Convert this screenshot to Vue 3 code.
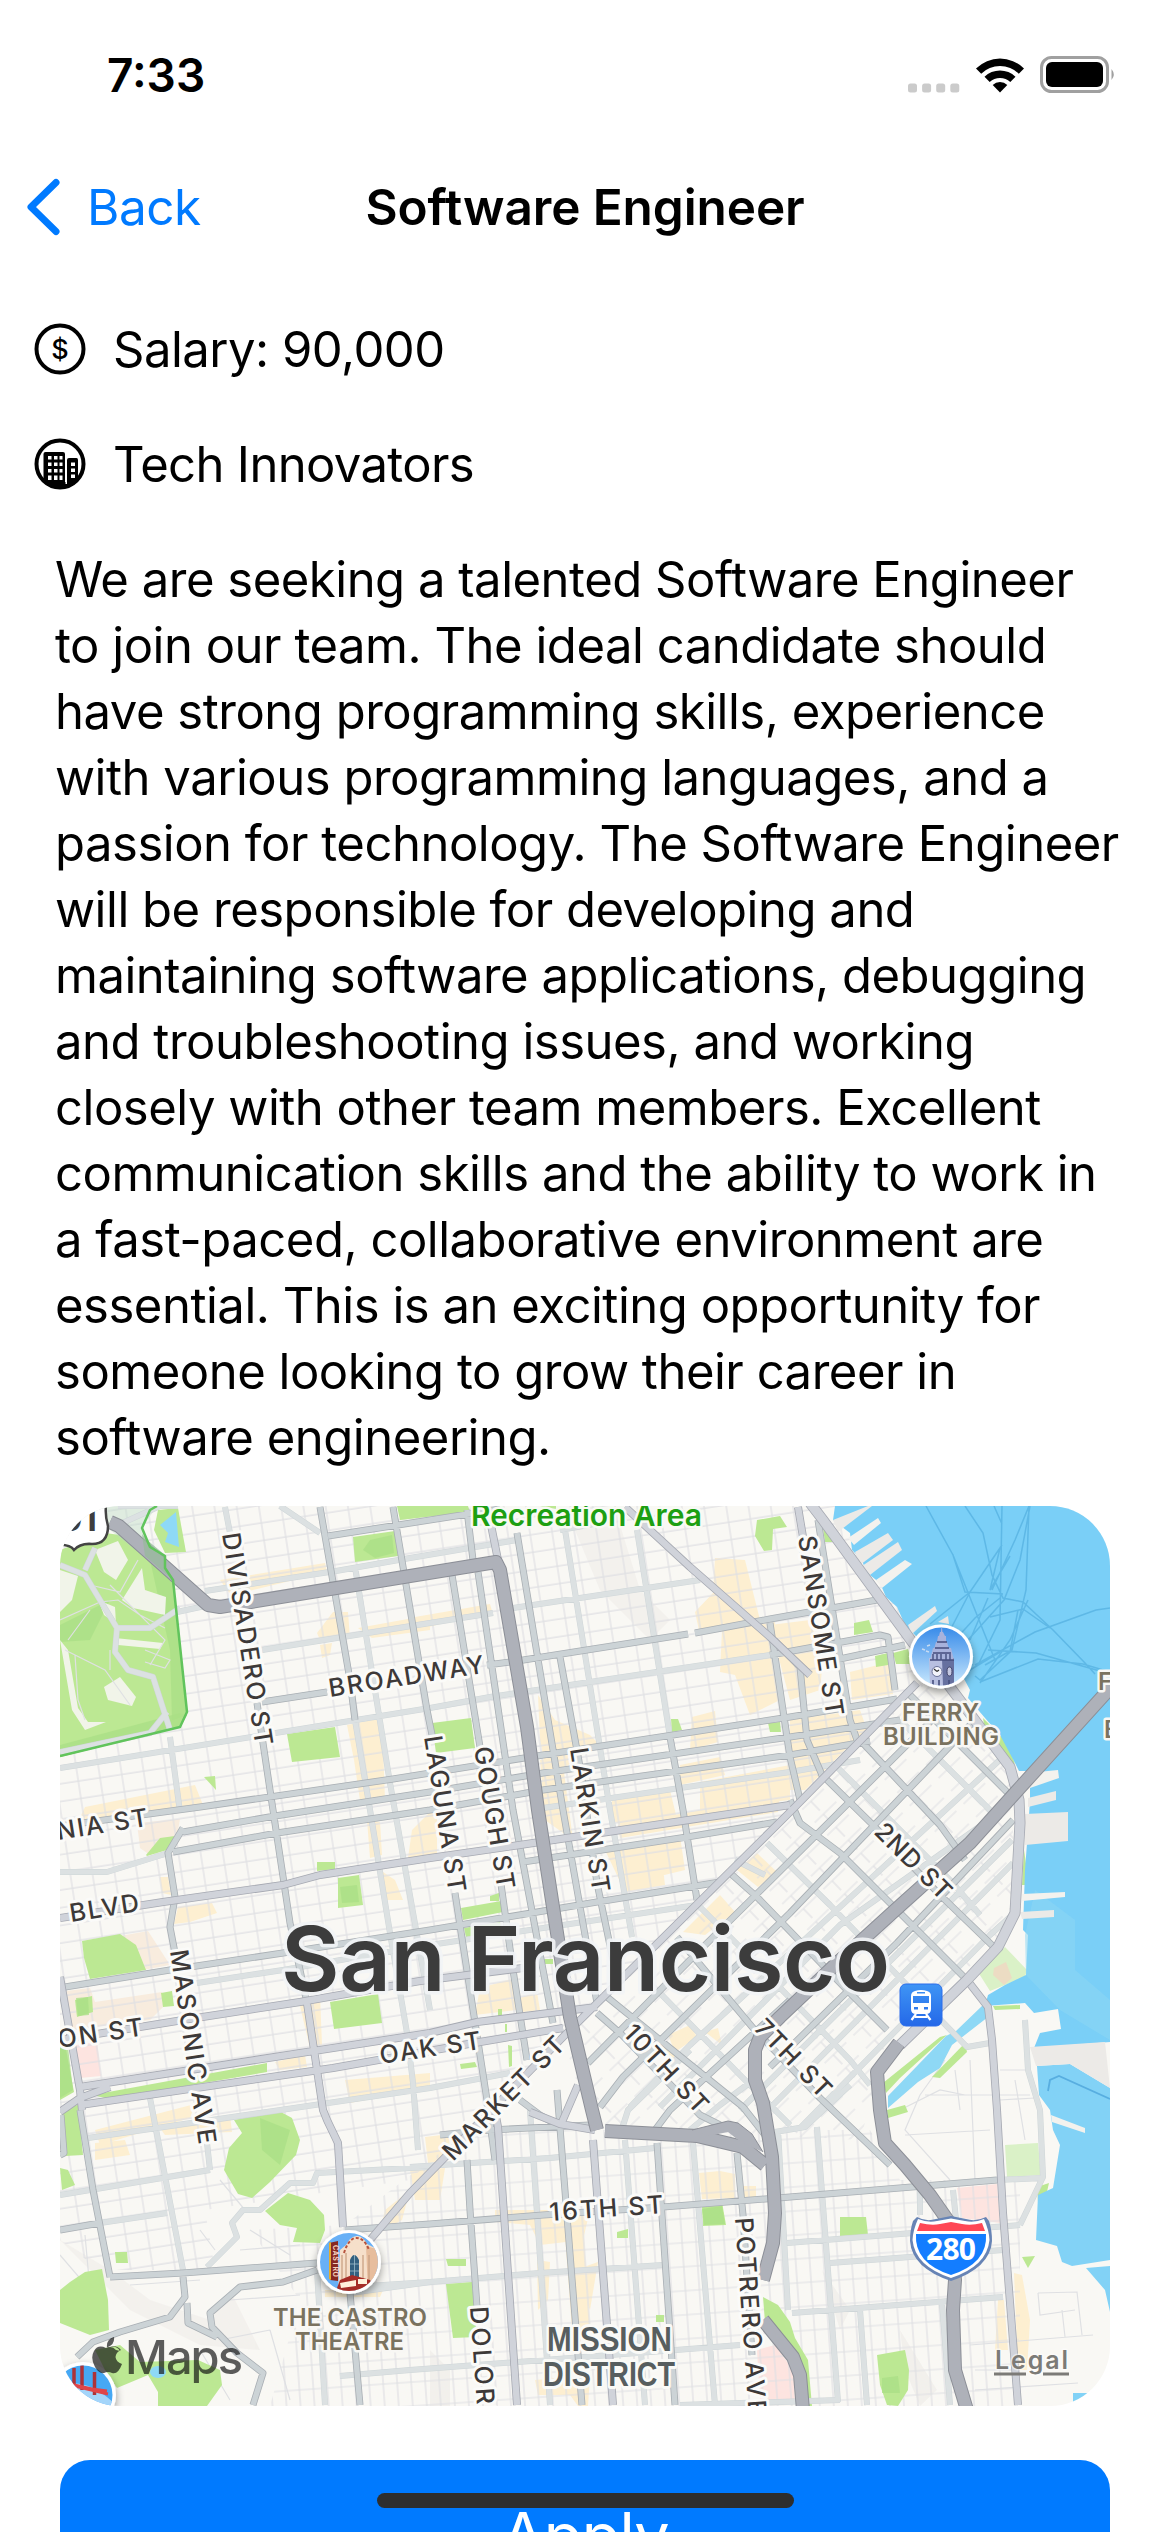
<script setup>
const lines = [
  'We are seeking a talented Software Engineer',
  'to join our team. The ideal candidate should',
  'have strong programming skills, experience',
  'with various programming languages, and a',
  'passion for technology. The Software Engineer',
  'will be responsible for developing and',
  'maintaining software applications, debugging',
  'and troubleshooting issues, and working',
  'closely with other team members. Excellent',
  'communication skills and the ability to work in',
  'a fast-paced, collaborative environment are',
  'essential. This is an exciting opportunity for',
  'someone looking to grow their career in',
  'software engineering.',
]

const parks = [
  'M60 1550L105 1533L120 1535L173 1580L187 1715L180 1727L60 1757Z',
  'M158 1510L178 1508L186 1552L165 1553L154 1530Z',
  'M397 1506H468L470 1512L400 1520Z', 'M540 1506H556V1509Z',
  'M353 1537L395 1531L398 1556L355 1562Z',
  'M287 1734L335 1727L340 1757L292 1762Z',
  'M432 1723L471 1718L475 1748L436 1753Z',
  'M204 1777L215 1776L216 1790Z',
  'M757 1520L780 1516L787 1527L773 1529L772 1550L764 1551L755 1536Z',
  'M671 1719H678L682 1730L672 1732Z', 'M768 1723L780 1722L781 1732L770 1732Z',
  'M823 1528L832 1535V1542H825Z', 'M854 1623L869 1620L873 1632L854 1635Z',
  'M875 1656L888 1653V1665L876 1667Z', 'M893 1653L908 1649L912 1664L896 1664Z',
  'M983 1718L1007 1742L1015 1764L1008 1760L985 1732Z',
  'M146 1855L160 1838L175 1836L167 1850L147 1856Z',
  'M82 1941L120 1934L136 1945L146 1970L90 1979L84 1958Z',
  'M75 2000L92 1996L93 2012L77 2017Z', 'M161 1993L172 1991L174 2006L163 2007Z',
  'M317 1862L335 1862V1869L317 1871Z', 'M338 1878L359 1875L363 1905L338 1908Z',
  'M330 2002L378 1994L382 2023L334 2029Z',
  'M461 1908L501 1901L503 1912L463 1920Z', 'M490 1896L499 1893V1901H490Z',
  'M464 1928L500 1922L503 1935L466 1937Z', 'M541 1959H553V1964H541Z',
  'M498 2009H502V2017H498Z', 'M505 2024H507V2032H505Z', 'M508 2045L512 2046V2066L509 2067Z',
  'M460 2064L475 2062L477 2067L461 2069Z',
  'M92 2095L267 2063L267 2072L110 2099Z',
  'M60 2043L65 2044L74 2092L60 2100Z', 'M62 2107L78 2105L83 2155L65 2156Z',
  'M60 2168L68 2170L75 2185L62 2190Z',
  'M234 2120L279 2111L292 2118L300 2140L296 2155L270 2182L252 2198L238 2194L224 2170L229 2148L242 2133Z',
  'M265 2211L288 2193L310 2200L324 2215L325 2230L320 2243L293 2242L297 2228L280 2225Z',
  'M115 2252L127 2252L128 2263L116 2263Z',
  'M60 2290L70 2282L85 2272L102 2269L108 2300L109 2330L90 2335L60 2323Z',
  'M95 2350L120 2345L140 2362L198 2360L220 2370L222 2385L207 2406H158V2392L148 2375L117 2388L105 2370Z',
  'M446 2259H466V2266H448Z', 'M446 2284L472 2282L477 2337L453 2338Z',
  'M617 2232L628 2229V2238H617Z', 'M656 2315H664V2322H656Z',
  'M702 2207L722 2202L726 2225L703 2226Z',
  'M763 2297L778 2305L790 2322L795 2338L808 2360L812 2406H806L802 2375L794 2352L765 2322Z',
  'M840 2217L866 2217L868 2235L840 2236Z',
  'M877 2355L905 2350L909 2370L908 2390L898 2406L887 2405L880 2385Z',
  'M883 2083L940 2037L947 2035L900 2078L886 2093Z',
  'M932 2077L965 2043L967 2052L940 2078Z',
  'M887 2110L905 2105L908 2112L888 2118Z', 'M1024 1850L1027 1870L1025 1885L1022 1885Z',
  'M993 2006L1020 2005V2009L995 2010Z', 'M1037 2187L1049 2183L1046 2196L1038 2202Z',
  'M1022 2257L1035 2256L1028 2268Z',
]
const darkParks = [
  'M370 1540L392 1535L394 1553L375 1558L363 1550Z', 'M60 1625L110 1600L90 1640L60 1642Z',
  'M340 1887L357 1885L359 1902L342 1903Z', 'M76 1998L88 1997L89 2015L78 2016Z',
  'M260 2118L290 2130L280 2165L262 2150Z', 'M702 2209L722 2206L725 2224L704 2225Z',
  'M882 2378L898 2376L900 2393L882 2393Z', 'M60 1745L180 1713L186 1716L180 1727L60 1757Z',
  'M150 1560L173 1580L187 1715L172 1720L170 1650Z', 'M60 2045L68 2047L73 2090L60 2098Z',
]
const shops = [
  'M220 1580L325 1563L327 1572L253 1590L232 1597Z', 'M333 1612L348 1612L350 1638L320 1640L317 1633Z',
  'M320 1645L332 1643L330 1655L322 1658Z', 'M358 1628L430 1615V1630L372 1638Z',
  'M347 1725L382 1718L385 1800L360 1800L354 1760Z', 'M85 1807L195 1785L203 1805L78 1822Z',
  'M415 1617L490 1604L492 1611L417 1630Z', 'M715 1558L745 1560L755 1600L760 1620L700 1635L695 1612L713 1593Z',
  'M722 1630L775 1622L780 1700L750 1715L735 1675L720 1672Z', 'M538 1695L555 1720L590 1735L598 1743L548 1780L540 1740Z',
  'M692 1717L715 1711L718 1742L690 1750Z', 'M680 1765L720 1757L725 1775L680 1785Z',
  'M700 1782L790 1765V1800L700 1810Z', 'M612 1800L670 1790L676 1815L630 1830L612 1820Z',
  'M770 1625L810 1620L823 1660L820 1690L790 1700Z', 'M790 1720L860 1710L867 1730L845 1750L805 1790L790 1790Z',
  'M850 1672L890 1662L893 1694L852 1700Z', 'M540 1760L562 1757L573 1840L545 1820Z',
  'M605 1850L660 1842L665 1885L625 1892Z', 'M660 1838L680 1836L685 1870L652 1878Z',
  'M618 1825L780 1796L778 1812L620 1838Z', 'M367 1820L380 1822L382 1855L370 1858Z',
  'M412 1830L437 1805L437 1855L408 1858Z', 'M380 1870L395 1880L403 1900H385Z',
  'M160 1877L168 1877L171 1895L162 1893Z', 'M178 1907L212 1903L217 1913L190 1922L174 1924Z',
  'M683 1932L720 1895L735 1912L705 1935Z', 'M737 1870L757 1853L777 1872L758 1887Z',
  'M480 1988L512 1979L516 2010L475 2015Z', 'M520 1998L537 1992L540 2010L522 2012Z',
  'M300 2006L320 1995L322 2045L310 2048Z', 'M275 2062L305 2055L307 2067L280 2070Z',
  'M668 2035L690 2025L697 2037L675 2052Z', 'M655 2042L677 2055L668 2063Z', 'M705 2032L718 2028L722 2045Z',
  'M345 2080L430 2073V2088L350 2103Z', 'M95 2130L195 2104L190 2118L100 2145Z', 'M95 2143L125 2140L130 2155L95 2160Z',
  'M160 2128L230 2115L232 2132L165 2135Z', 'M425 2137L450 2134L448 2160L428 2163Z',
  'M410 2170L445 2168L440 2200L415 2200Z', 'M385 2210L410 2190L402 2220L380 2232Z',
  'M495 2210L590 2210L583 2240L540 2245L530 2225L495 2222Z', 'M563 2210L582 2210L590 2330L572 2330Z',
  'M537 2260L550 2262L548 2300L538 2310Z', 'M575 2270L598 2262L590 2310Z', 'M535 2380L590 2375L588 2406H578L570 2395H538Z',
  'M699 2173L720 2171L735 2174V2198L702 2199Z', 'M742 2186L756 2186V2197H743Z',
  'M1014 2273L1022 2275L1030 2320L1027 2370L1018 2370Z', 'M998 2300L1004 2300L1008 2350L995 2350Z', 'M325 2290H383L380 2297H325Z',
]

const west = {
  light: [
    'M205 1591L336 1571L410 1558L517 1540', 'M177 1612L205 1606', 'M262 1650L430 1623L493 1613M513 1608L700 1580',
    'M60 1768L430 1708L490 1697L770 1655', 'M543 1808L790 1772L860 1760', 'M60 1872H107L168 1853',
    'M197 1983L283 1970L410 1948L697 1905', 'M88 2138L267 2112L430 2088L510 2073',
    'M225 1507L230 1533', 'M170 1737L180 1812', 'M355 1720L370 1810L390 1933L407 2033L413 2083L418 2150',
    'M355 1567L390 1783L417 1935L430 2010', 'M565 1530L610 1810L632 1937', 'M637 1530L670 1737',
    'M207 2143L210 2170', 'M560 1530L600 1523', 'M280 1506L320 1533', 'M118 1506L178 1506M118 1525L160 1506',
    'M60 1565L85 1575L100 1600L117 1628H150L180 1608M85 1570L95 1548M117 1628L115 1652L128 1670L153 1677L170 1730M167 1712L150 1733L60 1752',
  ],
  mid: [
    'M262 1702L327 1692M487 1665L517 1661L688 1634M695 1633L770 1619L877 1600',
    'M60 1826L200 1807L393 1779L543 1755L790 1717L897 1699', 'M183 1832L275 1816L430 1792L543 1773L790 1737L900 1720',
    'M173 1852L277 1833L430 1810L543 1790L790 1755L870 1741', 'M523 1862L687 1837L777 1822',
    'M65 1987L170 1970L283 1953L430 1930L597 1902L720 1882',
    'M257 1703L273 1810L290 1923L307 2003', 'M183 1828L168 1853L175 1897L170 1927L175 1953',
    'M320 1507L350 1680L355 1720', 'M393 1507L427 1710L433 1740M455 1893L487 2100L495 2160',
    'M452 1575L480 1747M500 1877L513 1970L527 2060', 'M467 1510L473 1560M478 1572L513 1810L553 2023',
    'M517 1533L563 1810L597 2003', 'M560 1657L580 1767L597 1883L613 1960', 'M670 1737L683 1810L697 1900',
    'M770 1623L790 1757L800 1800', 'M818 1520L850 1720L857 1740', 'M774 1640L800 1667L807 1740L822 1775', 'M328 1536L500 1509',
    'M770 1655L880 1635L888 1637L895 1690', 'M835 1660L905 1645',
  ],
  main: [
    'M60 1918L163 1902L283 1885L320 1875L430 1858L513 1846L790 1805', 'M60 2040L183 2020L300 2002L420 1981L523 1968',
    'M80 2087L307 2052L430 2033L477 2022L597 2007', 'M80 2105L333 2068L480 2042L563 2028',
    'M307 2003L323 2110L327 2120L338 2143L343 2227', 'M491 1525L498 1560', 'M625 1507L690 1567L770 1637L810 1675',
    'M798 1507L803 1537', 'M60 1977L80 2090L82 2110M60 2112L80 2098L110 2087',
    'M370 2240L410 2193L563 2037L790 1812L917 1683',
  ],
}
const soma = {
  light: [
    'M630 2107L690 2045L1003 1757', 'M740 2110L1012 1840', 'M770 2108L1013 1863', 'M800 2128L990 1935L1010 1917',
    'M767 1843L830 1905L900 1978L967 2047L990 2043', 'M700 1907L760 1967L850 2060L870 2085', 'M657 1990L740 2075L790 2125',
    'M660 2107L840 1925L1010 1805', 'M835 1765L950 1880L980 1915', 'M900 1720L1000 1820', 'M620 2135L628 2110L690 2050',
    'M775 2132L805 2127L850 2085', 'M690 2130L720 2105L760 2075', 'M735 1860L765 1875',
  ],
  mid: [
    'M588 2063L693 1957L775 1876L945 1707', 'M600 2107L623 2077L790 1913L975 1720', 'M770 2067L897 1943L1013 1820',
    'M790 1800L800 1823L840 1853L887 1900L967 1980', 'M820 1773L873 1825L940 1895L997 1950', 'M730 1873L757 1897L847 1990L887 2030',
    'M677 1937L753 2028L820 2098L890 2165', 'M607 1997L660 2040L743 2107L765 2135', 'M597 2013L622 2035L700 2115L720 2125',
    'M860 1740L940 1825L965 1860', 'M905 1690L1010 1795', 'M655 2130L670 2110L790 2000',
  ],
}
const south = {
  light: [
    'M410 2167L550 2158L655 2148', 'M353 2287L430 2282L540 2273L663 2265', 'M340 2376L410 2370L650 2352L740 2345',
    'M787 2243L913 2233L1020 2225', 'M830 2263L1003 2250', 'M792 2313L1003 2297', 'M997 2180L1043 2178',
    'M530 2110L550 2405', 'M625 2140L645 2405', 'M693 2143L715 2405', 'M778 2130L788 2310', 'M817 2127L838 2402',
    'M860 2310L867 2405', 'M942 2303L950 2405', 'M953 2190L957 2230', 'M920 2190L920 2215',
    'M1025 2020L1028 2070L1040 2110L1043 2177L1020 2225', 'M150 2098L183 2270', 'M60 2195L210 2170', 'M100 2223L167 2213',
    'M207 2267L237 2237L232 2223L243 2210H260L290 2183H313L317 2173L430 2167', 'M317 2270L325 2405', 'M350 2293L430 2282',
    'M680 2405L840 2400',
  ],
  mid: [
    'M440 2135L490 2130L590 2125', 'M345 2230L430 2224L543 2215L663 2207L790 2197L997 2180', 'M110 2277L183 2273L317 2263',
    'M467 2160L470 2210L477 2307', 'M557 2090L582 2405', 'M657 2143L675 2405', 'M737 2153L743 2215L752 2355',
    'M80 2110L93 2190L110 2277', 'M60 2230L100 2223', 'M183 2277L185 2297L170 2317L120 2332L93 2342L77 2357',
    'M187 2303L188 2323L217 2337', 'M317 2270L283 2282L240 2287L210 2313L212 2327L237 2353L263 2373L253 2405',
    'M350 2293L360 2405', 'M520 2100L540 2115L557 2125', 'M60 2155L64 2153L61 2115',
  ],
  main: [
    'M493 2100L498 2127L517 2405', 'M593 2140L613 2405', 'M967 1980L988 2007L992 2040L997 2110L1003 2213L1018 2405',
    'M530 2112L560 2124L595 2130M562 2122L578 2085',
  ],
}
const waterfront = 'M810 1503L823 1520L913 1643L950 1687L1010 1767L1019 1800L1020 1823L1015 1913L998 1947L967 1980L900 2045'
const freeways = [
  'M110 1522L119 1526L208 1605L220 1607L496 1562L500 1570L527 1727L538 1810L570 2017L592 2110L597 2130',
  'M1114 1684L1016 1792L970 1843L903 1903L837 1963L780 2017L760 2037L755 2050V2080L763 2103L772 2157L775 2213L773 2243L763 2280',
  'M763 2320L793 2357L800 2375L803 2410',
  'M605 2131L697 2136L743 2147L765 2165',
  'M899 2043L877 2072L880 2110L885 2143L905 2165L930 2195L951 2225L955 2280L953 2310L955 2370L967 2410',
]
const light = [...west.light, ...soma.light, ...south.light].join('')
const mid = [...west.mid, ...soma.mid, ...south.mid].join('')
const main = [...west.main, ...south.main].join('')
const freeway = freeways.join('')

const piers = [
  'M833 1520L868 1506H872L838 1532Z', 'M848 1538L878 1518L881 1523L854 1545Z', 'M855 1552L888 1533L893 1540L860 1565Z',
  'M862 1566L898 1542L902 1550L870 1575Z', 'M876 1580L905 1560L912 1564L882 1588Z', 'M908 1625L935 1606L937 1611L912 1634Z',
  'M938 1622L948 1616L949 1624Z', 'M1028 1773L1058 1770L1059 1778L1030 1788Z', 'M1028 1798L1056 1791V1800L1028 1807Z',
  'M1025 1814L1068 1812V1841L1025 1845Z', 'M1022 1894L1065 1892V1897L1022 1901Z', 'M1020 1912L1054 1910V1917L1022 1919Z',
  'M1030 2047L1105 2042L1110 2088L1070 2064L1036 2066Z', 'M1051 2115L1085 2128V2133L1052 2122Z',
]
const ferries = 'M926 1506L953 1555L995 1660M965 1506L983 1533L992 1575L1003 1598L1023 1602L1053 1630L1085 1663L1095 1674M1029 1506L1015 1540L992 1590M1029 1506L1026 1590L1012 1650L985 1665M1002 1506L1000 1620L978 1665M1030 1506L1020 1560L1004 1600L968 1640M994 1506L1002 1524M1002 1545L970 1592L930 1624M953 1555L965 1592L1003 1594M1000 1548L990 1590L1010 1556M970 1592L945 1640M988 1598L970 1640M1000 1598L975 1618L955 1640M990 1617L1023 1609L1050 1628M1110 1608L1096 1610L1035 1632L975 1665M1018 1610L1010 1652L980 1680L975 1676M988 1650L1036 1653L1100 1671M980 1682L1038 1659L1083 1664L1110 1672M980 1683L1010 1640L1028 1600M970 1670L1000 1652'

const labels = [
  ['DIVISADERO ST', 222, 1534, 81, 215], ['BROADWAY', 330, 1697, -8.9, 157], ['SANSOME ST', 798, 1537, 81, 182],
  ['LAGUNA ST', 424, 1737, 81, 158], ['GOUGH ST', 474, 1748, 80.5, 144], ['LARKIN ST', 570, 1749, 81, 146],
  ['NIA ST', 58, 1840, -9, 92], ['BLVD', 71, 1922, -9, 70], ['ON ST', 59, 2048, -8.5, 86],
  ['MASONIC AVE', 170, 1951, 81.5, 196], ['OAK ST', 381, 2064, -8.6, 102], ['MARKET ST', 453, 2162, -45.5, 162],
  ['10TH ST', 622, 2034, 47, 111], ['7TH ST', 753, 2029, 46, 98], ['2ND ST', 873, 1833, 45, 97],
  ['16TH ST', 550, 2221, -4, 114], ['POTRERO AVE', 735, 2218, 86, 198], ['DOLORES', 470, 2307, 86, 135],
]
</script>

<template>
  <main class="screen">
    <header class="status">
      <span class="time">7:33</span>
      <span class="signals">
        <svg class="dots" width="52" height="36" viewBox="0 0 52 36">
          <rect v-for="i in 4" :key="i" :x="(i - 1) * 14.1" y="26.5" width="9" height="9" rx="2.5" fill="#cbcbcb" />
        </svg>
        <svg class="wifi" width="50" height="36" viewBox="0 0 50 36">
          <path d="M1 11.500A34 34 0 0 1 49 11.500L43.800 16.700A27 27 0 0 0 6.200 16.700Z" />
          <path d="M9.500 19.800A22 22 0 0 1 40.500 19.800L35.300 25A15 15 0 0 0 14.700 25Z" />
          <path d="M17.700 28A10.500 10.500 0 0 1 32.300 28L25 35.500Z" />
        </svg>
        <svg class="battery" width="76" height="37" viewBox="0 0 76 37">
          <rect x="1.500" y="1.500" width="66" height="34" rx="10" fill="none" stroke="#a0a0a0" stroke-width="3" />
          <rect x="6" y="6" width="57" height="25" rx="6" />
          <path d="M71.500 13Q76 18.500 71.500 24Z" fill="#a0a0a0" />
        </svg>
      </span>
    </header>

    <nav class="nav">
      <span class="back">
        <svg width="36" height="58" viewBox="0 0 36 58"><path d="M31 4.500L6 29L31 53.500" fill="none" stroke="#007aff" stroke-width="7" stroke-linecap="round" stroke-linejoin="round" /></svg>
        <span class="back-text">Back</span>
      </span>
      <h1 class="title">Software Engineer</h1>
      <span></span>
    </nav>

    <section class="facts">
      <div class="fact">
        <svg width="52" height="52" viewBox="0 0 52 52">
          <circle cx="26" cy="26" r="23.500" fill="none" stroke="#000" stroke-width="4" />
          <text class="dollar" x="26" y="36" text-anchor="middle">$</text>
        </svg>
        <span class="salary">Salary: 90,000</span>
      </div>
      <div class="fact">
        <svg width="52" height="52" viewBox="0 0 52 52">
          <circle cx="26" cy="26" r="23.500" fill="none" stroke="#000" stroke-width="4" />
          <path d="M9.500 16Q9.500 14 11.500 14H29Q31 14 31 16V44H33V22Q33 20 35 20H42.500Q44 20 44 22V41L36 48H16L9.500 41Z" />
          <g fill="#fff">
            <path d="M14 18h3.500v3.500H14zM20 18h3.500v3.500H20zM25.500 18h3v3.500h-3zM14 24.500h3.500V28H14zM20 24.500h3.500V28H20zM25.500 24.500h3V28h-3zM14 31h3.500v3.500H14zM20 31h3.500v3.500H20zM25.500 31h3v3.500h-3zM14 37.500h3.500V42H14zM20 37.500h3.500V42H20zM25.500 37.500h3V42h-3z" />
            <path d="M37 24.500h4V28h-4zM37 30.500h4V34h-4zM37 36.500h4V40h-4zM31.500 20h1.500v26h-1.500z" />
          </g>
        </svg>
        <span class="company">Tech Innovators</span>
      </div>
    </section>

    <p class="description"><span v-for="line in lines" :key="line" class="line">{{ line }}</span></p>

    <svg class="map" width="1050" height="900" viewBox="60 1506 1050 900">
      <defs>
        <pattern id="gridWest" width="22" height="17.500" patternUnits="userSpaceOnUse" patternTransform="rotate(-8.700)">
          <path d="M0 5H22M6 0V17.500" class="minor" />
        </pattern>
        <pattern id="gridSoma" width="40" height="18" patternUnits="userSpaceOnUse" patternTransform="rotate(-44)">
          <path d="M0 5H30M12 5V18" class="minor" />
        </pattern>
        <pattern id="gridSouth" width="14" height="24" patternUnits="userSpaceOnUse" patternTransform="rotate(-4)">
          <path d="M0 5H14M6 0V24" class="minor" />
        </pattern>
        <linearGradient id="sky" x1="0" y1="0" x2="0" y2="1"><stop offset="0" stop-color="#388be9" /><stop offset="1" stop-color="#c9e8fd" /></linearGradient>
        <linearGradient id="train" x1="0" y1="0" x2="0" y2="1"><stop offset="0" stop-color="#3f95f5" /><stop offset="1" stop-color="#2468e8" /></linearGradient>
        <filter id="drop" x="-40%" y="-40%" width="180%" height="190%"><feDropShadow dx="0" dy="4" stdDeviation="4" flood-color="#000" flood-opacity=".4" /></filter>
        <clipPath id="ferryClip"><circle cx="941" cy="1656.500" r="29" /></clipPath>
        <clipPath id="castroClip"><circle cx="349" cy="2262" r="29" /></clipPath>
        <clipPath id="gateClip"><circle cx="83" cy="2395" r="29.500" /></clipPath>
      </defs>

      <rect x="60" y="1506" width="1050" height="900" fill="#f9f8f4" />
      <g fill="#efede9" opacity=".65">
        <path d="M575 1530L620 1525L640 1590L670 1620L650 1640L600 1590Z" /><path d="M60 2240L110 2270L150 2300L210 2320L230 2290L260 2350L200 2345L130 2310Z" />
        <path d="M822 2270L850 2310L840 2330Z" /><path d="M900 2330L937 2390L920 2406L905 2370Z" /><path d="M430 2350L450 2370L450 2406H430Z" />
      </g>
      <path v-for="d in shops" :key="d" :d="d" fill="#fdefd1" />
      <path d="M137 1823L180 1819L177 1836L150 1855L140 1848ZM120 1936L148 1931L170 1965L143 1970ZM66 1991L90 1988L95 2002L162 1992L165 2005L150 2020L70 2030Z" fill="#f8ecde" />
      <path d="M76 2045L97 2042L101 2076L80 2078ZM957 2188L997 2184L1000 2223L962 2218ZM757 2350L775 2345L793 2370L795 2402L760 2403Z" fill="#fde4e0" />

      <path d="M60 1506H835L917 1640V1683L563 2037L410 2180L205 2210L215 2270H100L60 2240Z" fill="url(#gridWest)" />
      <path d="M917 1683L950 1687L1010 1767L1017 1920L880 2070L860 2140L590 2125L563 2037Z" fill="url(#gridSoma)" />
      <path d="M345 2225L470 2130H870L900 2180H1020V2330L1010 2406H270L300 2300L250 2230Z" fill="url(#gridSouth)" />
      <path class="minor" d="M900 2110L940 2090L965 2095M945 2060L920 2095L905 2130L950 2180M970 2060L975 2180M925 2095H1030M905 2135L990 2130M955 2070L960 2110M1000 2070H1028M1000 2100L1035 2098M1015 2080L1025 2140M1038 2293L1077 2292L1082 2335M1038 2293L1040 2315L1075 2310M970 2345L1093 2335M975 2370H1020M975 2390L1078 2383M1062 2310L1065 2337M200 2230L215 2250M220 2180L245 2210M130 2285L200 2280M230 2300L300 2295M220 2340L270 2330M200 2350L230 2400M270 2330L290 2400M60 2255L90 2290L85 2235M240 2250L300 2245M250 2230L290 2255" />

      <path v-for="d in parks" :key="d" :d="d" fill="#bce893" />
      <path v-for="d in darkParks" :key="d" :d="d" fill="#a9df85" opacity=".75" />
      <g fill="#f1f4e9">
        <path d="M95 1550L118 1541L128 1560L116 1580L104 1572Z" /><path d="M122 1600L142 1568L145 1590L166 1597L165 1615L133 1608Z" />
        <path d="M60 1570L78 1576L72 1600L60 1612Z" /><path d="M98 1600L115 1607L116 1624L104 1615Z" /><path d="M115 1638L163 1643L160 1649L118 1645Z" />
        <path d="M104 1687L120 1677L136 1697L132 1706L108 1700Z" /><path d="M60 1640L68 1650L78 1708L88 1722L106 1722L85 1730L72 1710Z" />
      </g>
      <path class="minor" d="M60 1620L100 1602L118 1600L140 1615L165 1628M90 1585L120 1592L138 1560M68 1640L90 1610M65 1650L105 1670L130 1705M75 1655L78 1700L85 1720M110 1650V1670M110 1585L165 1640L150 1665M145 1650L170 1660L165 1668L145 1662" />
      <path d="M160 1525L176 1512L179 1547L165 1542L168 1533Z" fill="#8ed9f6" />
      <ellipse cx="158" cy="2372" rx="8" ry="6" fill="#8ed9f6" />
      <path d="M60 1506L157 1506L142 1528L147 1540L165 1555V1568L173 1580L110 1530Z" fill="#b9d9c3" opacity=".4" />
      <path d="M978 1972L1005 1947L1027 1970L1025 1977L990 1991ZM1005 2145L1038 2143L1041 2175L1007 2177Z" fill="#daf1c7" />
      <path d="M994 1968L1006 1962L1012 1978L1004 1985L993 1975Z" fill="#ecdcc3" />

      <path d="M835 1506L833 1520L850 1533L852 1550L862 1560L866 1572L880 1583L886 1597L897 1607L905 1625L920 1640L955 1662L970 1690L968 1698L985 1718L1000 1735L1015 1763L1019 1771L1030 1771L1030 1800L1028 1830L1025 1870L1023 1930L1028 1935L1026 1975L1005 1985L988 1995L985 2006L1025 2003L1034 2013L1058 2009L1061 2029L1040 2033L1034 2048L1110 2042V1506Z" fill="#7acff7" />
      <path d="M985 1998L982 2006L956 2031L946 2036L888 2096L888 2108L918 2082L940 2068L952 2045L988 2017Z" fill="#8ed8f5" />
      <path d="M1110 2088L1070 2064L1037 2066L1039 2095L1050 2110L1053 2130L1060 2145L1053 2188L1038 2195L1036 2240L1057 2246L1062 2262L1072 2266L1110 2260ZM1086 2268L1110 2266V2312L1105 2290ZM1073 2393H1090L1080 2406H1073Z" fill="#82d2f6" />
      <path d="M1025 1935L1035 1890L1075 1920V1970L1110 2000V2040L1060 2010L1026 1975Z" fill="#8cd7f4" opacity=".55" />
      <path v-for="(d, i) in piers" :key="d" :d="d" :fill="i % 3 === 1 ? '#f3f2ee' : '#eceae7'" />
      <path :d="ferries" fill="none" stroke="#4ba8db" stroke-opacity=".6" stroke-width="1.500" />
      <path d="M1048 2091L1050 2080L1059 2076L1110 2099" fill="none" stroke="#58aee0" stroke-width="1.800" />

      <g fill="none" stroke-linejoin="round">
        <path :d="light" stroke="#cfd6d8" stroke-width="6" /><path :d="light" stroke="#dce1e2" stroke-width="5" />
        <path :d="mid" stroke="#a9afb4" stroke-width="7" /><path :d="mid" stroke="#ccd3d6" stroke-width="5.400" />
        <path :d="main" stroke="#a6a9b2" stroke-width="8" /><path :d="main" stroke="#d0d3da" stroke-width="6.400" />
        <path :d="waterfront" stroke="#a6a9b2" stroke-width="11" /><path :d="waterfront" stroke="#d0d3da" stroke-width="9.400" />
        <path :d="freeway" stroke="#8c8f97" stroke-width="14" /><path :d="freeway" stroke="#aeb1b9" stroke-width="12" />
        <path d="M692 2130L728 2121L738 2123L752 2134L763 2152L742 2143L728 2132L708 2136Z" fill="#aeb1b9" />
        <path d="M692 2130L728 2121L738 2123L752 2134L763 2152" stroke="#8c8f97" />
        <path d="M142 1534L147 1540L165 1555V1568L173 1580L145 1556Z" fill="#95b99a" opacity=".7" />
        <path d="M157 1506L150 1510L142 1528L147 1540L150 1547L165 1556V1568L173 1580L187 1712L180 1727L60 1756" stroke="#61c45c" stroke-width="2.500" />
      </g>

      <path d="M56 1500H107Q104 1512 108 1526Q108 1544 92 1544Q80 1543 74 1550Q70 1544 56 1545Z" fill="#fff" stroke="#444" stroke-width="2.500" />
      <text class="route" x="97" y="1531" text-anchor="end">101</text>

      <g class="street">
        <text v-for="[name, x, y, angle, length] in labels" :key="name" :textLength="length" :transform="`translate(${x} ${y}) rotate(${angle})`">{{ name }}</text>
      </g>
      <text class="area" x="471" y="1526" textLength="231">Recreation Area</text>
      <text class="district" x="547" y="2351" textLength="125" lengthAdjust="spacingAndGlyphs">MISSION</text>
      <text class="district" x="543" y="2386" textLength="132" lengthAdjust="spacingAndGlyphs">DISTRICT</text>
      <g class="poi">
        <text x="902" y="1720.500" textLength="77">FERRY</text><text x="883" y="1745" textLength="116">BUILDING</text>
        <text x="273" y="2326" textLength="154">THE CASTRO</text><text x="295" y="2350" textLength="109">THEATRE</text>
        <text x="1098" y="1690">F</text><text x="1104" y="1738">B</text>
      </g>
      <text class="city" x="281" y="1991" textLength="609">San Francisco</text>

      <g filter="url(#drop)"><circle cx="941" cy="1656.500" r="32" fill="#fff" /><circle cx="349" cy="2262" r="32" fill="#fff" /><circle cx="83" cy="2395" r="33" fill="#fff" /></g>
      <g clip-path="url(#ferryClip)">
        <rect x="912" y="1627" width="58" height="59" fill="url(#sky)" />
        <path d="M929 1658H954V1686H930Z" fill="#b8bfe0" /><path d="M942 1658H954V1686H943Z" fill="#66709f" />
        <path d="M933 1648H951L954 1660H930ZM936 1642H947L949 1649H934ZM938 1636H946V1642H937ZM940 1632H943L945 1636H939ZM941 1632L941.700 1623L942.400 1632Z" fill="#a8b2dc" />
        <path d="M930 1660H954M933 1653H951M935 1648H949M937 1642H947" stroke="#454e7d" stroke-width="1.400" /><path d="M933 1654V1660M937 1654V1660M941 1654V1660M946 1654V1660M950 1654V1660" stroke="#4b5484" stroke-width="1.500" />
        <circle cx="937" cy="1671.500" r="5" fill="#f3f3fb" stroke="#6a7198" stroke-width="1" /><path d="M937 1671.500L934 1669M937 1671.500L939 1670" stroke="#333" stroke-width="1.200" />
        <ellipse cx="949.500" cy="1671.500" rx="2.500" ry="4.500" fill="#c5c8e2" stroke="#414367" /><path d="M933 1680V1686M939 1680V1686M949 1680V1686" stroke="#454e7d" stroke-width="1.600" />
        <path d="M922 1649L925 1650M927 1646L930 1645M926 1651L929 1652" stroke="#c8dcf2" stroke-width="1.500" />
      </g>
      <g clip-path="url(#castroClip)">
        <rect x="319" y="2232" width="60" height="60" fill="#68b0f6" />
        <path d="M338 2292L340 2250L346 2245L350 2239Q360 2231 367 2244L375 2248V2292Z" fill="#f6dfca" /><path d="M366 2246L380 2250V2292H368Z" fill="#e7bd9d" />
        <path d="M344 2253Q348 2240 355 2238Q364 2237 369 2250" fill="none" stroke="#b8543e" stroke-width="2" stroke-dasharray="3 2" />
        <path d="M342 2255V2280M346 2253V2280M363 2255V2280M369 2255V2280" stroke="#caa184" stroke-width="1.300" /><path d="M350 2278V2260Q354 2250 359 2260V2278Z" fill="#326080" /><path d="M354.500 2255V2278M350 2264H359M350 2271H359" stroke="#9cbdca" stroke-width=".8" />
        <path d="M329 2243L338 2241V2281L330 2280Z" fill="#882721" /><path d="M329 2243L331 2242V2280L329 2279Z" fill="#e3ad35" />
        <text class="sign" transform="translate(332.500 2245) rotate(90)" textLength="32">CASTRO</text>
        <path d="M337 2288L340 2280L352 2275L370 2280L374 2286L370 2292H340Z" fill="#a52c27" /><path d="M340 2283L356 2280V2286L341 2288ZM358 2279H367V2284H358Z" fill="#fff0db" />
      </g>
      <g clip-path="url(#gateClip)">
        <rect x="50" y="2363" width="66" height="48" fill="#46a8f4" /><path d="M50 2392Q80 2370 116 2405V2415H50Z" fill="#bce0fb" opacity=".8" />
        <path d="M74 2368V2388M82 2365V2390M94.500 2372V2395" stroke="#ad3238" stroke-width="3.500" /><path d="M50 2374L75 2386L108 2394M65 2383L92 2389L107 2391" stroke="#df4549" stroke-width="3.200" fill="none" />
      </g>

      <rect x="900" y="1984" width="42" height="42" rx="6" fill="url(#train)" stroke="#2a6deb" stroke-width="1" />
      <path fill-rule="evenodd" d="M915 1991Q921 1989 927 1991Q931 1992 931 1996V2009Q931 2014 926 2014H916Q911 2014 911 2009V1996Q911 1992 915 1991ZM917 1992V1993.500H925V1992ZM913 1996V2003H929V1996ZM914 2007V2009.500H918V2007ZM924 2007V2009.500H928V2007Z" fill="#fff" /><path d="M916 2014L911.500 2020M926 2014L930.500 2020M915 2017H927" stroke="#fff" stroke-width="2.200" />

      <path d="M917 2217Q926 2222 936 2219L951 2216L966 2219Q976 2222 986 2217L989 2221Q992 2230 992 2241Q990 2268 951 2281Q912 2268 910 2241Q910 2230 913 2221Z" fill="#6784b5" />
      <path d="M918 2219Q928 2223 937 2221L951 2218.500L965 2221Q975 2223 984 2219Q989 2230 989.500 2240Q987 2266 951 2278Q915 2266 912.500 2240Q913 2230 918 2219Z" fill="#fff" />
      <path d="M920 2223Q932 2226 940 2224L951 2222L962 2224Q971 2226 982 2223L985 2231H917Z" fill="#ff4755" /><path d="M916 2234H986Q988 2263 951 2275Q914 2263 916 2234Z" fill="#137dff" />
      <text class="shield" x="926" y="2260" textLength="50">280</text>

      <g opacity=".68">
        <path d="M116 2350Q112 2345 106 2348Q98 2344 94 2351Q90 2358 95 2367Q99 2374 104 2373Q108 2371 112 2373Q118 2375 122 2364Q116 2362 115.500 2357Q116 2352 121 2350Q118 2346 112 2346Q109 2347 107 2348Q106 2339 114 2337Q115 2344 108 2347Q117 2345 120 2351Z" fill="#111" />
        <text class="maps" x="125" y="2374" textLength="118">Maps</text>
      </g>
      <text class="legal" x="995" y="2369" textLength="73">Legal</text><path d="M994 2374H1026M1043 2374H1069" stroke="#7c7b77" stroke-width="3" />
    </svg>

    <button class="apply">Apply</button>
    <span class="home"></span>
  </main>
</template>

<style>
body { margin: 0; background: #fff; }
</style>

<style scoped>
.screen { position: relative; width: 1170px; height: 2532px; overflow: hidden; background: #fff; color: #000; font-family: Inter, "Noto Sans", sans-serif; }
.status { display: flex; justify-content: space-between; align-items: center; height: 133px; padding: 8px 54px 0 107px; }
.time { font-size: 46px; font-weight: 600; letter-spacing: 0; }
.signals { display: flex; align-items: center; }
.wifi { margin-left: 15px; }
.battery { margin-left: 15px; }
.nav { display: grid; grid-template-columns: 1fr auto 1fr; align-items: center; height: 132px; padding: 0 1px 0 25px; }
.back { display: flex; align-items: center; gap: 26px; color: #007aff; font-size: 49.500px; }
.back-text { letter-spacing: -.5px; }
.title { margin: 0; font-size: 49.500px; font-weight: 600; letter-spacing: -.100px; white-space: nowrap; transform: translateX(-12px); }
.facts { display: flex; flex-direction: column; gap: 55px; padding: 46px 34px 0; }
.fact { display: flex; align-items: center; gap: 27px; height: 60px; font-size: 49px; }
.salary { letter-spacing: -.5px; }
.company { letter-spacing: -.65px; }
.dollar { font: 500 27px Inter, sans-serif; }
.description { margin: 53px 0 35px 55px; font-size: 49px; line-height: 66px; letter-spacing: -.48px; }
.line { display: block; white-space: nowrap; }
.map { display: block; margin-left: 60px; border-radius: 60px; }
.minor { fill: none; stroke: #dfe0e3; stroke-width: 1.200; }
.map text { font-family: Inter, sans-serif; paint-order: stroke; stroke-linejoin: round; }
.street text { font-size: 25px; font-weight: 500; fill: #3d3938; stroke: #fbfbf9; stroke-width: 6px; }
.area { font-size: 30px; font-weight: 600; fill: #1d9f12; stroke: #f8faf4; stroke-width: 5px; }
.map .district { font-family: "Liberation Sans", sans-serif; font-size: 35px; font-weight: 700; fill: #575e5f; stroke: #fafaf7; stroke-width: 6px; }
.poi text { font-size: 24px; font-weight: 600; fill: #7a725f; stroke: #f8f7f4; stroke-width: 5px; }
.city { font-size: 90px; font-weight: 600; fill: #3c3c3c; stroke: rgba(242, 244, 246, .9); stroke-width: 7px; }
.route { font-size: 34px; font-weight: 700; fill: #3d3d3d; }
.map .sign { font-size: 7px; font-weight: 700; fill: #f4d0bd; }
.map .shield { font-family: "Noto Sans", sans-serif; font-size: 30px; font-weight: 700; fill: #fff; }
.maps { font-size: 47px; font-weight: 500; fill: #111; }
.legal { font-size: 25px; font-weight: 600; fill: #7c7b77; stroke: rgba(255, 255, 255, .5); stroke-width: 3px; }
.apply { display: block; width: 1050px; height: 150px; margin: 54px 0 0 60px; padding: 0; border: 0; border-radius: 30px; background: #007aff; color: #fff; font: 400 63px/136px Inter, sans-serif; letter-spacing: -.8px; }
.home { position: absolute; left: 377px; top: 2493px; width: 417px; height: 15px; border-radius: 8px; background: #2e2e2e; }
</style>
